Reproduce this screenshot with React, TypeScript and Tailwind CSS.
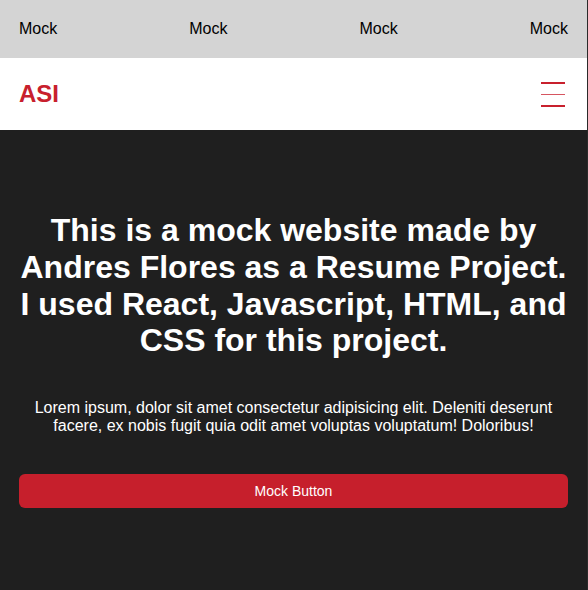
import React from "react";

const App = () => {
  return (
    <div className="min-h-[590px] bg-[#2a2a2a] flex font-['Liberation_Sans',Arial,sans-serif]">
      <div className="w-[587px] min-h-[590px] bg-[#1f1f1f]">
        <div className="h-[58px] bg-[#d4d4d4] flex items-center justify-between px-[19px] text-black text-base">
          <span>Mock</span>
          <span>Mock</span>
          <span>Mock</span>
          <span>Mock</span>
        </div>
        <nav className="h-[72px] bg-white flex items-center justify-between px-[19px]">
          <span className="text-[#c8202d] text-2xl font-bold">ASI</span>
          <button className="w-[24px] flex flex-col gap-[10px] mr-[3px] mt-[1px]">
            <span className="block h-[1.5px] bg-[#c8202d]"></span>
            <span className="block h-[1.5px] bg-[#d65560]"></span>
            <span className="block h-[1.5px] bg-[#c8202d]"></span>
          </button>
        </nav>
        <section className="px-[19px] pt-[82px] pb-[80px] text-white text-center">
          <h1 className="text-[32px] leading-[36.8px] font-bold -mx-[6px] whitespace-nowrap">
            This is a mock website made by
            <br />
            Andres Flores as a Resume Project.
            <br />
            I used React, Javascript, HTML, and
            <br />
            CSS for this project.
          </h1>
          <p className="mt-[40px] text-base leading-[18px]">
            Lorem ipsum, dolor sit amet consectetur adipisicing elit. Deleniti
            deserunt facere, ex nobis fugit quia odit amet voluptas voluptatum!
            Doloribus!
          </p>
          <button className="mt-[39px] w-full h-[34px] rounded-md bg-[#c61f2c] text-white text-sm">
            Mock Button
          </button>
        </section>
      </div>
    </div>
  );
};

export default App;
